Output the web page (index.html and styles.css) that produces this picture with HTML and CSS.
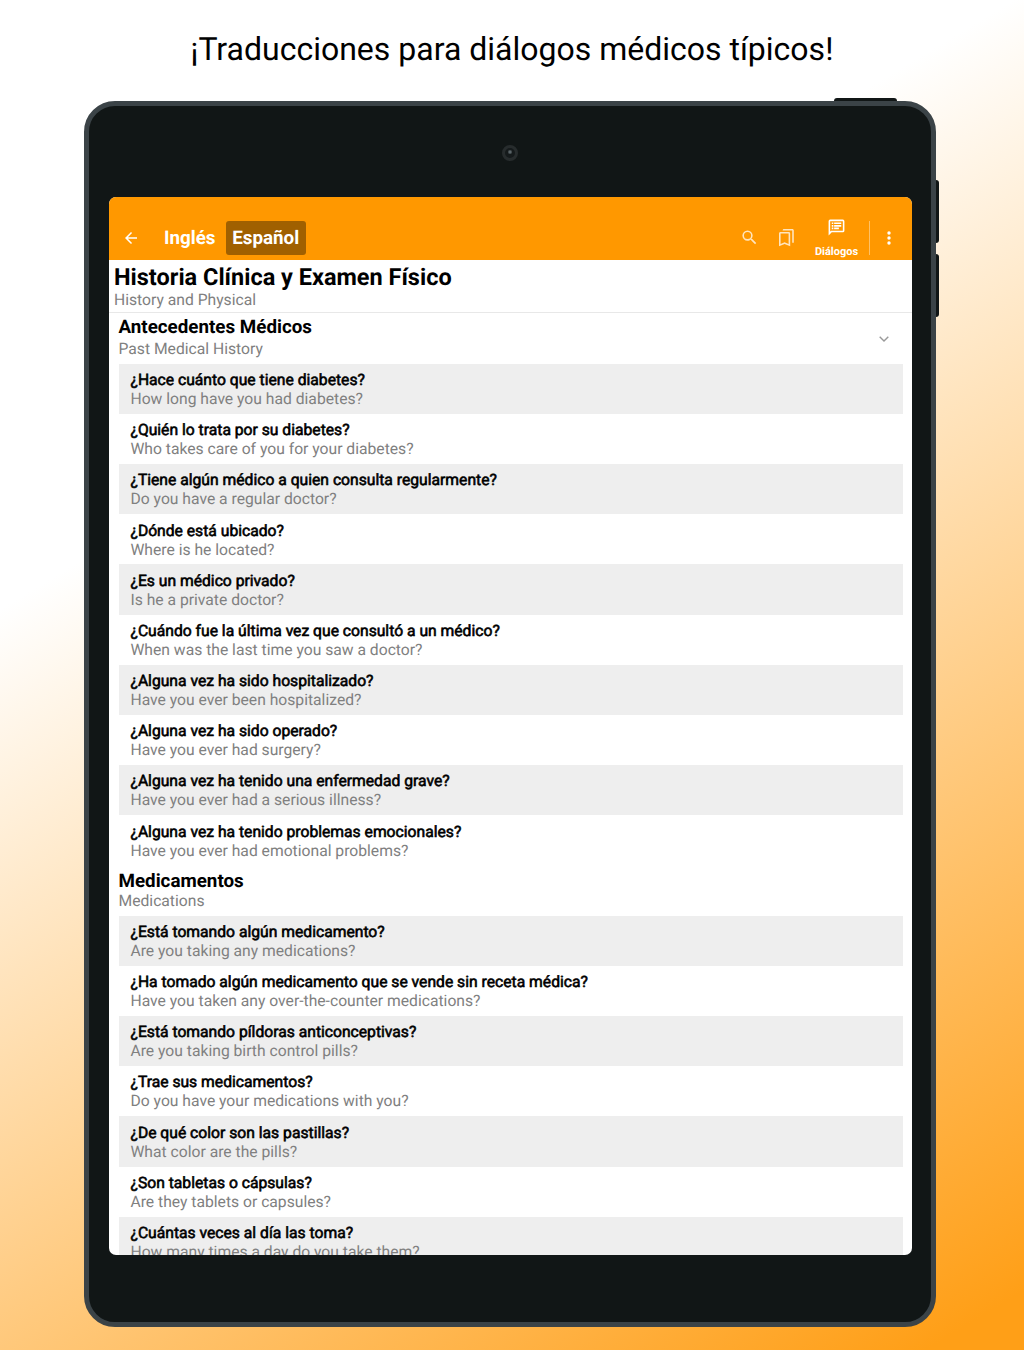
FILE: index.html
```html
<!DOCTYPE html>
<html lang="es">
<head>
<meta charset="utf-8">
<title>Diálogos médicos</title>
<link rel="stylesheet" href="styles.css">
</head>
<body>
<h1 class="headline"><span>¡Traducciones para diálogos médicos típicos!</span></h1>
<div class="tablet">
  <i class="key key-top"></i><i class="key key-up"></i><i class="key key-down"></i>
  <div class="bezel"><i class="camera"></i></div>
  <main class="screen">
    <header class="bar">
      <svg class="back" viewBox="0 0 24 24"><path d="M20 11H7.83l5.59-5.59L12 4l-8 8 8 8 1.41-1.41L7.83 13H20z"/></svg>
      <nav class="tabs"><b class="tab">Inglés</b><b class="tab active">Español</b></nav>
      <svg class="search dim" viewBox="0 0 24 24"><path d="M15.5 14h-.79l-.28-.27A6.47 6.47 0 0 0 16 9.5 6.5 6.5 0 1 0 9.500 16c1.61 0 3.09-.59 4.23-1.57l.27.28v.79l5 4.99L20.49 19zm-6 0a4.5 4.5 0 1 1 0-9 4.5 4.5 0 0 1 0 9z"/></svg>
      <svg class="marks dim" viewBox="0 0 15 18"><path fill-rule="evenodd" d="M0 17.3V4.500C0 3.600.6 3 1.500 3h8.200c.9 0 1.500.6 1.500 1.500v12.800l-5.600-2.400zM1.600 14.900l4-1.700 4 1.700V4.600h-8zM3.600 1.500C3.600.6 4.200 0 5.100 0h8.200c.9 0 1.500.6 1.500 1.500v12.300h-1.600V1.600H3.600z"/></svg>
      <div class="dialogs">
        <svg viewBox="0 0 24 24"><path fill-rule="evenodd" d="M20 2H4a2 2 0 0 0-2 2v18l4-4h14a2 2 0 0 0 2-2V4a2 2 0 0 0-2-2zm0 14H5.2L4 17.2V4h16z"/><path d="M6 5.7h2v2H6zm0 3.2h2v2H6zm0 3.2h2v2H6zM9 5.7h9v2H9zm0 3.2h9v2H9zm0 3.2h6v2H9z"/></svg>
        <b>Diálogos</b>
      </div>
      <i class="rule"></i>
      <svg class="more" viewBox="0 0 4 14"><circle cx="2" cy="2" r="1.7"/><circle cx="2" cy="7" r="1.7"/><circle cx="2" cy="12" r="1.7"/></svg>
    </header>
    <div class="title"><h2>Historia Clínica y Examen Físico</h2><p>History and Physical</p></div>
    <section>
      <div class="group"><div><h3>Antecedentes Médicos</h3><p>Past Medical History</p></div>
        <svg class="chevron" viewBox="0 0 10 6"><path d="M.7.7 5 5 9.300.7"/></svg></div>
      <ul class="list">
        <li><b>¿Hace cuánto que tiene diabetes?</b><p>How long have you had diabetes?</p></li>
        <li><b>¿Quién lo trata por su diabetes?</b><p>Who takes care of you for your diabetes?</p></li>
        <li><b>¿Tiene algún médico a quien consulta regularmente?</b><p>Do you have a regular doctor?</p></li>
        <li><b>¿Dónde está ubicado?</b><p>Where is he located?</p></li>
        <li><b>¿Es un médico privado?</b><p>Is he a private doctor?</p></li>
        <li><b>¿Cuándo fue la última vez que consultó a un médico?</b><p>When was the last time you saw a doctor?</p></li>
        <li><b>¿Alguna vez ha sido hospitalizado?</b><p>Have you ever been hospitalized?</p></li>
        <li><b>¿Alguna vez ha sido operado?</b><p>Have you ever had surgery?</p></li>
        <li><b>¿Alguna vez ha tenido una enfermedad grave?</b><p>Have you ever had a serious illness?</p></li>
        <li><b>¿Alguna vez ha tenido problemas emocionales?</b><p>Have you ever had emotional problems?</p></li>
      </ul>
    </section>
    <section>
      <div class="group second"><div><h3>Medicamentos</h3><p>Medications</p></div></div>
      <ul class="list">
        <li><b>¿Está tomando algún medicamento?</b><p>Are you taking any medications?</p></li>
        <li><b>¿Ha tomado algún medicamento que se vende sin receta médica?</b><p>Have you taken any over-the-counter medications?</p></li>
        <li><b>¿Está tomando píldoras anticonceptivas?</b><p>Are you taking birth control pills?</p></li>
        <li><b>¿Trae sus medicamentos?</b><p>Do you have your medications with you?</p></li>
        <li><b>¿De qué color son las pastillas?</b><p>What color are the pills?</p></li>
        <li><b>¿Son tabletas o cápsulas?</b><p>Are they tablets or capsules?</p></li>
        <li><b>¿Cuántas veces al día las toma?</b><p>How many times a day do you take them?</p></li>
      </ul>
    </section>
  </main>
</div>
</body>
</html>
```
FILE: styles.css
```css
* { box-sizing: border-box; margin: 0; padding: 0; }
body {
  width: 1024px; height: 1350px; overflow: hidden;
  font-family: Roboto, "Liberation Sans", sans-serif; color: #000;
  text-rendering: geometricPrecision;
  background: linear-gradient(149deg, #fff 31%, #ff9f17 97%);
}
svg { display: block; fill: #fff; flex: none; }
.headline { height: 101.3px; padding-top: 30px; text-align: center; font-size: 32px; line-height: 38px; font-weight: 400; }
.tablet {
  position: relative; width: 851.6px; height: 1225.3px; margin-left: 84.4px; padding: 0 19.6px;
  background: #111616; border: 5px solid #3b4347; border-radius: 31px;
}
.key { position: absolute; background: #111616; }
.key-top { top: -8px; left: 745px; width: 63px; height: 3px; border-radius: 3px 3px 0 0; }
.key-up, .key-down { left: 846.6px; width: 3px; height: 63px; border-radius: 0 3px 3px 0; }
.key-up { top: 74px; }
.key-down { top: 148px; }
.bezel { height: 90.6px; display: flex; justify-content: center; padding-top: 39px; }
.camera { width: 16px; height: 16px; border: 3px solid #272c2d; border-radius: 50%; background: radial-gradient(circle at 5px 4px, #5a6468 0 1px, #151a1b 2.5px); }
.screen { width: 803px; height: 1058.5px; overflow: hidden; background: #fff; border-radius: 7px; }
.bar { height: 62.7px; padding: 18.8px 20.5px 0 13px; display: flex; align-items: center; background: #ff9800; color: #fff; }
.back { width: 18px; height: 18px; }
.tabs { display: flex; margin-left: 18px; font-size: 18.8px; line-height: 34px; }
.tab { padding: 0 6px; }
.tab.active { margin-left: 4.2px; padding: 0 6.5px; border-radius: 3px; background: #a06000; }
.dim { opacity: .75; }
.search { width: 19px; height: 19px; margin-left: auto; }
.marks { width: 15px; height: 18px; margin-left: 20px; }
.dialogs { width: 44px; margin-left: 20px; display: flex; flex-direction: column; align-items: center; gap: 8px; font-size: 11px; line-height: 13px; }
.dialogs svg { width: 19px; height: 19px; }
.rule { width: 1px; height: 34px; margin: 0 17px 0 11px; background: #ffc166; }
.more { width: 4px; height: 14px; }
p { color: #808080; font-size: 15.68px; line-height: 19px; }
.title { height: 53px; padding: 4px 5px 0; border-bottom: 1px solid #e8e8e8; }
.title h2 { font-size: 23.5px; line-height: 27px; }
.title p { margin-top: -1px; }
.group { height: 51.2px; padding: 3.7px 23.3px 0 9.5px; display: flex; justify-content: space-between; }
.group.second { height: 50.2px; padding-top: 4.4px; }
.group h3 { font-size: 18.8px; line-height: 23px; }
.group p { margin-top: -.7px; }
.group.second p { margin-top: -1.8px; }
.chevron { width: 10px; height: 6px; margin-top: 19.3px; fill: none; stroke: #999; stroke-width: 1.4; }
.list { list-style: none; margin: 0 9px 0 9.7px; }
.list li { height: 50.18px; padding: 6.3px 11.8px 0; }
.list li:nth-child(odd) { background: #eee; }
.list b { display: block; font-size: 15.68px; line-height: 19px; font-weight: 400; -webkit-text-stroke: .6px #000; }
```
